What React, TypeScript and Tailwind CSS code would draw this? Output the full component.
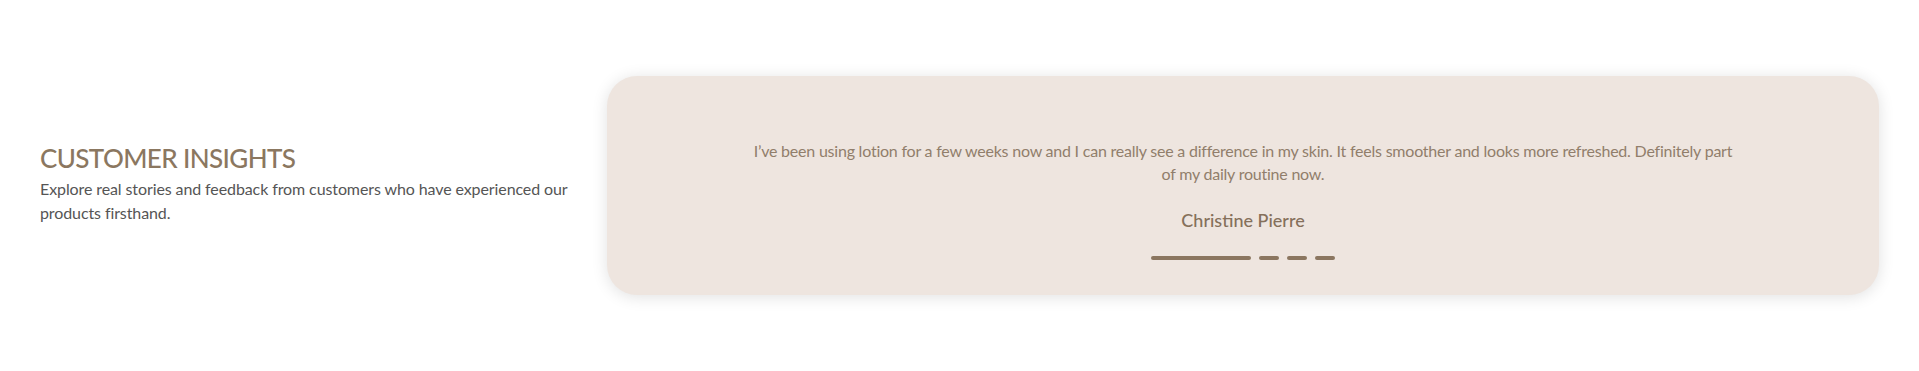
const slides = [
  {
    quote:
      "I’ve been using lotion for a few weeks now and I can really see a difference in my skin. It feels smoother and looks more refreshed. Definitely part of my daily routine now.",
    name: "Christine Pierre",
  },
  { quote: "", name: "" },
  { quote: "", name: "" },
  { quote: "", name: "" },
];

export default function App() {
  const active = 0;

  return (
    <div
      className="flex h-[371px] w-full items-center bg-white px-10"
      style={{ fontFamily: "Lato, 'Open Sans', sans-serif" }}
    >
      {/* Intro */}
      <div className="w-[567px] shrink-0 pb-[4px]">
        <h2 className="text-[26px] leading-[32px] font-medium uppercase tracking-[-0.6px] text-[#8b7760]">
          Customer Insights
        </h2>
        <p className="mt-[3px] w-[548px] text-[16px] leading-[24px] tracking-[-0.1px] text-[#555555]">
          Explore real stories and feedback from customers who have experienced our products firsthand.
        </p>
      </div>

      {/* Testimonial slider */}
      <div className="flex h-[219px] flex-1 flex-col items-center rounded-[30px] bg-[#eee5df] pt-[63px] shadow-[0_2px_16px_rgba(0,0,0,0.12)]">
        <p className="max-w-[985px] text-center text-[16px] leading-[23px] tracking-[-0.22px] text-[#917e6b]">
          {slides[active].quote}
        </p>
        <h3 className="mt-[23px] text-[18px] leading-[24px] font-medium text-[#85705b]">
          {slides[active].name}
        </h3>
        <div className="mt-[24px] flex items-center gap-2">
          {slides.map((_, i) => (
            <span
              key={i}
              className={
                i === active
                  ? "h-1 w-[100px] rounded-full bg-[#8b7660]"
                  : "h-1 w-5 rounded-full bg-[#8b7660]"
              }
            />
          ))}
        </div>
      </div>
    </div>
  );
}
